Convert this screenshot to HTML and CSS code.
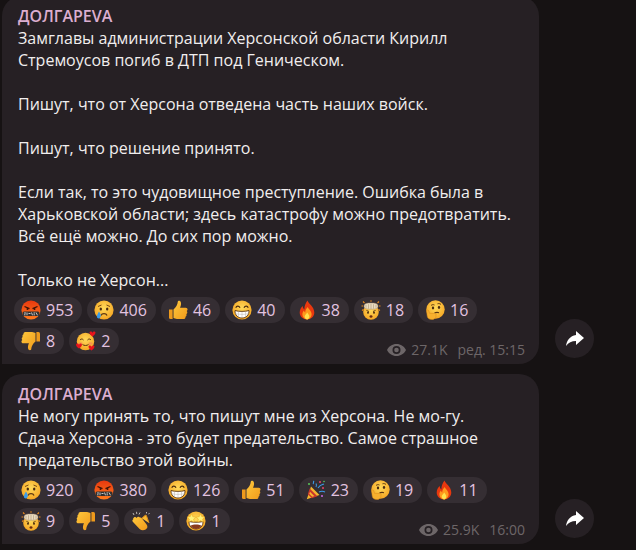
FILE: index.html
```html
<!DOCTYPE html>
<html lang="en">
<head>
    <meta charset="UTF-8">
    <meta name="viewport" content="width=device-width, initial-scale=1.0">
    <title>ДОЛГАРЕVА</title>
    <link rel="stylesheet" href="styles.css">
</head>
<body>
    <svg class="sprites" width="0" height="0">
        <defs>
            <radialGradient id="yel" cx="50%" cy="40%" r="60%"><stop offset="0" stop-color="#ffd95a"/><stop offset="1" stop-color="#f5a623"/></radialGradient>
            <linearGradient id="red" x1="0" y1="0" x2="0" y2="1"><stop offset="0" stop-color="#e8380f"/><stop offset="1" stop-color="#ff7a1c"/></linearGradient>
            <linearGradient id="thumb" x1="0" y1="0" x2="1" y2="1"><stop offset="0" stop-color="#ffc83d"/><stop offset="1" stop-color="#f09a1a"/></linearGradient>
            <symbol id="e-rage" viewBox="0 0 20 20">
                <circle cx="10" cy="10" r="9.6" fill="url(#red)"/>
                <path d="M3.5 6.5 8.5 8.6M16.500 6.500 11.500 8.600" stroke="#3a1208" stroke-width="1.300" fill="none"/>
                <circle cx="6.500" cy="9" r="1" fill="#3a1208"/><circle cx="13.500" cy="9" r="1" fill="#3a1208"/>
                <rect x="1.500" y="11.500" width="17" height="4.500" rx="1.500" fill="#33302f"/>
                <path d="M3 13h2M3 14.800h1.500M6 12.500v2.800M7.500 13.500h2M10.500 12.500l1 2.800M12.500 13h1.500M12.500 14.800h1.500M15 12.500l1.500 2.800" stroke="#eee" stroke-width=".8"/>
            </symbol>
            <symbol id="e-cry" viewBox="0 0 20 20">
                <circle cx="10" cy="10" r="9.600" fill="url(#yel)"/>
                <path d="M4 6.500 7.500 5M16 6.500 12.500 5" stroke="#7a4a12" stroke-width="1" fill="none"/>
                <ellipse cx="6.800" cy="9" rx="1.200" ry="1.500" fill="#4a2c10"/><ellipse cx="13.200" cy="9" rx="1.200" ry="1.500" fill="#4a2c10"/>
                <path d="M7 15.500C8 13 12 13 13 15.500" stroke="#5a3410" stroke-width="1.300" fill="none"/>
                <path d="M5 11.500C6.800 14.500 7.500 16 6 17.800 4.600 19.300 2.400 18 3 15.800 3.300 14.500 4.300 13 5 11.500Z" fill="#3a9be8"/>
            </symbol>
            <symbol id="e-up" viewBox="0 0 20 20">
                <path d="M1 9.500h3.600v9.500H2.500A1.500 1.500 0 0 1 1 17.500Z" fill="#ee9a1c"/>
                <path d="M5.500 9.500C8 7.500 9.500 5 9.800 1.800 10 .4 12.800.4 13 3c.2 1.800-.5 3.500-1 4.700h5.700c2 0 2.500 2.500 1 3.300 1 1 .7 2.500-.4 3 .6 1.100.1 2.300-.9 2.700.3 1.300-.5 2.300-1.800 2.300H9c-1.500 0-2.500-.8-3.500-1Z" fill="url(#thumb)"/>
            </symbol>
            <symbol id="e-down" viewBox="0 0 20 20">
                <path d="M19 10.500h-3.600V1h2.100A1.500 1.500 0 0 1 19 2.500Z" fill="#ee9a1c"/>
                <path d="M14.500 10.500C12 12.500 10.500 15 10.200 18.200 10 19.600 7.200 19.600 7 17c-.2-1.800.5-3.500 1-4.700H2.300c-2 0-2.500-2.500-1-3.300-1-1-.7-2.500.4-3-.6-1.100-.1-2.300.9-2.700C2.300 2 3.100 1 4.400 1H11c1.500 0 2.500.8 3.500 1Z" fill="url(#thumb)"/>
            </symbol>
            <symbol id="e-grin" viewBox="0 0 20 20">
                <circle cx="10" cy="10" r="9.600" fill="url(#yel)"/>
                <path d="M3.800 7.800C4.500 5.600 7 5.600 8 7.800M12 7.800c1-2.200 3.500-2.200 4.200 0" stroke="#4a2c10" stroke-width="1.200" fill="none"/>
                <path d="M3 10.500c3 1.200 11 1.200 14 0 .3 4.500-3 7.500-7 7.500s-7.300-3-7-7.500Z" fill="#fff" stroke="#5a3410" stroke-width=".9"/>
                <path d="M3.500 13.500c4 1.200 9 1.200 13 0M6.500 11.500v5.500M10 11.700v6M13.500 11.500v5.500" stroke="#b9b2a8" stroke-width=".5" fill="none"/>
            </symbol>
            <symbol id="e-fire" viewBox="0 0 20 20">
                <path d="M10.500.5c1 3.500 6.800 6 6.800 12 0 4-3.300 7-7.300 7s-7.300-3-7.300-7c0-2.700 1.300-4.800 3-6.500.1 1.500.6 2.700 1.700 3.500C7.300 6 8.500 3 10.500.5Z" fill="#e8380f"/>
                <path d="M10.800 7c.5 2 3.800 3.800 3.800 7.300 0 2.800-2 5-4.600 5s-4.600-2.200-4.600-5c0-1.500.7-2.800 1.600-3.700.2.900.6 1.500 1.200 2C8.200 10.500 9.200 8.500 10.800 7Z" fill="#ff9a1c"/>
                <path d="M10.300 12.500c.3 1.200 2 2 2 3.900 0 1.600-1 3-2.300 3s-2.300-1.300-2.300-2.800c0-1.700 1.800-2.500 2.600-4.100Z" fill="#ffe14d"/>
            </symbol>
            <symbol id="e-boom" viewBox="0 0 20 20">
                <circle cx="10" cy="12" r="7.800" fill="url(#yel)"/>
                <path d="M3 6.200C3 3.500 6 3 10 3s7 .5 7 3.200-3 3-7 3-7-.3-7-3Z" fill="#e9dcc0" stroke="#a5886a" stroke-width=".5"/>
                <path d="M5 4.800v3M7.500 4.200v4.500M10 4v5M12.500 4.200v4.500M15 4.800v3" stroke="#b79f80" stroke-width=".7"/>
                <path d="M2 1.500 3.500 3M18 1.500 16.500 3M.5 6h1.500M18 6h1.500M1 10.500l1.500-1M19 10.500l-1.500-1M10 .2v1.600" stroke="#e8891c" stroke-width="1.100"/>
                <path d="M5.500 10.500 8 11.500M14.500 10.500 12 11.500" stroke="#4a2c10" stroke-width=".9"/>
                <circle cx="7" cy="12.800" r="1" fill="#4a2c10"/><circle cx="13" cy="12.800" r="1" fill="#4a2c10"/>
                <ellipse cx="10" cy="16.500" rx="1.500" ry="1.300" fill="#6a2a12"/>
            </symbol>
            <symbol id="e-think" viewBox="0 0 20 20">
                <circle cx="10.500" cy="9.500" r="9.200" fill="url(#yel)"/>
                <path d="M6 5.500C7 4.500 8.500 4.500 9.500 5M12.500 3.800c1.200-.5 2.700-.2 3.500.8" stroke="#5a3410" stroke-width="1" fill="none"/>
                <ellipse cx="8" cy="8" rx="1.200" ry="1.400" fill="#4a2c10"/><ellipse cx="14" cy="7.500" rx="1.200" ry="1.400" fill="#4a2c10"/>
                <path d="M9.500 13c1.500-.8 3-.8 4.500-.3" stroke="#5a3410" stroke-width="1.100" fill="none"/>
                <path d="M1.500 10.500c1-.8 2-.5 2.300.5l.7 2.300 5.500.2c1.500.1 1.500 2 .7 2.300.6 1 .1 2-.7 2.200-.5 1-1.500 1.500-3 1.500-3 0-4.500-1.200-4.800-3.500Z" fill="#f7b02e" stroke="#d98a18" stroke-width=".5"/>
            </symbol>
            <symbol id="e-hearts" viewBox="0 0 20 20">
                <circle cx="9.500" cy="10.500" r="8.700" fill="url(#yel)"/>
                <path d="M4 9c1-1.300 2.500-1.300 3.500 0M11.500 9c1-1.300 2.500-1.300 3.500 0M6.500 13.500c1.500 1.300 4.500 1.300 6 0" stroke="#5a3410" stroke-width="1" fill="none"/>
                <ellipse cx="4.500" cy="12.500" rx="2" ry="1.300" fill="#f2885a" opacity=".7"/><ellipse cx="14.500" cy="12.500" rx="2" ry="1.300" fill="#f2885a" opacity=".7"/>
                <path id="h1" d="M16.500 5.500C13.500 3.500 13 1.500 14 .8c1-.6 2 0 2.500 1 .5-1 1.500-1.600 2.500-1 1 .7.500 2.700-2.500 4.700Z" fill="#e8141c"/>
                <path d="M3 17.500C0 15.500-.5 13.500.5 12.800c1-.6 2 0 2.500 1 .5-1 1.500-1.600 2.500-1 1 .7.500 2.700-2.500 4.700Z" fill="#e8141c"/>
                <path d="M15.500 19.500c-3-2-3.500-4-2.500-4.700 1-.6 2 0 2.500 1 .5-1 1.500-1.600 2.500-1 1 .7.500 2.700-2.500 4.700Z" fill="#e8141c"/>
            </symbol>
            <symbol id="e-party" viewBox="0 0 20 20">
                <path d="M.8 19.200 5 6.500 13.500 15Z" fill="#f5b52e"/>
                <path d="M2.500 14 4 9.800l6.200 6.200-4.200 1.500ZM3.700 10.500l5.800 5.800" stroke="#c8352c" stroke-width="1.300" fill="none"/>
                <path d="M7 4c1-1 0-2 1-3M12 8c2-3 3-3 6-4M13 12c2-1 4-1 6 0M10 3.500c.5 1 1 2 0 3.500" stroke="#3a9be8" stroke-width="1.100" fill="none"/>
                <circle cx="14" cy="2" r="1" fill="#e8456a"/><circle cx="17" cy="8" r="1" fill="#e8456a"/><circle cx="3" cy="4" r="1" fill="#5ac85a"/><circle cx="16" cy="16" r="1" fill="#c86ae8"/><circle cx="18" cy="1.500" r=".8" fill="#5ac85a"/>
            </symbol>
            <symbol id="e-clap" viewBox="0 0 20 20">
                <path d="M3 6.500c.8-.8 2-.5 2.500.4l1-.9c.8-.7 2-.3 2.300.6.800-.4 1.700 0 2 .7l4.800 6.200c1.500 2.200.8 4-1 5-2 1.200-4.300 1-6-.5L1.800 10.800C1 10 1.300 8.800 2.300 8.600 1.900 7.800 2.200 7 3 6.500Z" fill="url(#thumb)"/>
                <path d="M10.800 7.300 14 4.500c.8-.6 1.800 0 1.700.9l2.300 6.500" stroke="#e08e18" stroke-width="1" fill="#f9ba33"/>
                <path d="M2 2 3 4M5.500.8 5.800 3M9 1.500 8 3.500M15.500 1v1.500M18.500 2l-1 1.300" stroke="#c9c5c0" stroke-width=".9"/>
            </symbol>
            <symbol id="e-star" viewBox="0 0 20 20">
                <circle cx="10" cy="10" r="9.600" fill="url(#yel)"/>
                <path d="M3 10.500c3 1 11 1 14 0 .3 4.500-3 7.500-7 7.500s-7.300-3-7-7.500Z" fill="#fff" stroke="#5a3410" stroke-width=".9"/>
                <path d="M4.500 14.500c3-1.500 8-1.500 11 0-1 2.300-3 3.500-5.500 3.500s-4.500-1.200-5.500-3.500Z" fill="#8a3a1c"/>
                <path id="s1" d="m5.500 2.800 1.300 2.900 3 .4-2.200 2 .6 3-2.700-1.500-2.700 1.500.6-3-2.200-2 3-.4Z" fill="#fff27a" stroke="#e8a81c" stroke-width=".5"/>
                <path d="m14.500 2.800 1.300 2.900 3 .4-2.200 2 .6 3-2.700-1.500-2.700 1.500.6-3-2.200-2 3-.4Z" fill="#fff27a" stroke="#e8a81c" stroke-width=".5"/>
            </symbol>
            <symbol id="i-eye" viewBox="0 0 19 12">
                <path fill-rule="evenodd" d="M9.500 0C5.200 0 1.700 2.500 0 6c1.700 3.500 5.200 6 9.500 6s7.800-2.500 9.500-6c-1.700-3.500-5.200-6-9.500-6Zm0 10a4 4 0 1 1 0-8 4 4 0 0 1 0 8Zm0-6.300a2.300 2.300 0 1 0 0 4.600 2.300 2.300 0 0 0 0-4.600Z"/>
            </symbol>
        </defs>
    </svg>

    <div class="feed">
        <div class="row">
            <div class="bubble">
                <div class="name">ДОЛГАРЕVА</div>
                <div class="text">
                    <p>Замглавы администрации Херсонской области Кирилл<br>Стремоусов погиб в ДТП под Геническом.</p>
                    <p>Пишут, что от Херсона отведена часть наших войск.</p>
                    <p>Пишут, что решение принято.</p>
                    <p>Если так, то это чудовищное преступление. Ошибка была в<br>Харьковской области; здесь катастрофу можно предотвратить.<br>Всё ещё можно. До сих пор можно.</p>
                    <p>Только не Херсон...</p>
                </div>
                <div class="reactions">
                    <span class="chip"><svg class="emoji"><use href="#e-rage"/></svg>953</span>
                    <span class="chip"><svg class="emoji"><use href="#e-cry"/></svg>406</span>
                    <span class="chip"><svg class="emoji"><use href="#e-up"/></svg>46</span>
                    <span class="chip"><svg class="emoji"><use href="#e-grin"/></svg>40</span>
                    <span class="chip"><svg class="emoji"><use href="#e-fire"/></svg>38</span>
                    <span class="chip"><svg class="emoji"><use href="#e-boom"/></svg>18</span>
                    <span class="chip"><svg class="emoji"><use href="#e-think"/></svg>16</span>
                    <span class="chip"><svg class="emoji"><use href="#e-down"/></svg>8</span>
                    <span class="chip"><svg class="emoji"><use href="#e-hearts"/></svg>2</span>
                </div>
                <div class="meta"><svg class="eye"><use href="#i-eye"/></svg><span>27.1K</span><span class="time">ред. 15:15</span></div>
            </div>
            <button class="share"><svg width="18" height="15" viewBox="0 0 18 15"><path d="M10 0 18 7 10 14V10C5.500 10 2.500 11.500 0 15 .8 9.500 4 5 10 4Z"/></svg></button>
        </div>

        <div class="row">
            <div class="bubble">
                <div class="name">ДОЛГАРЕVА</div>
                <div class="text">
                    <p>Не могу принять то, что пишут мне из Херсона. Не мо-гу.<br>Сдача Херсона - это будет предательство. Самое страшное<br>предательство этой войны.</p>
                </div>
                <div class="reactions">
                    <span class="chip"><svg class="emoji"><use href="#e-cry"/></svg>920</span>
                    <span class="chip"><svg class="emoji"><use href="#e-rage"/></svg>380</span>
                    <span class="chip"><svg class="emoji"><use href="#e-grin"/></svg>126</span>
                    <span class="chip"><svg class="emoji"><use href="#e-up"/></svg>51</span>
                    <span class="chip"><svg class="emoji"><use href="#e-party"/></svg>23</span>
                    <span class="chip"><svg class="emoji"><use href="#e-think"/></svg>19</span>
                    <span class="chip"><svg class="emoji"><use href="#e-fire"/></svg>11</span>
                    <span class="chip"><svg class="emoji"><use href="#e-boom"/></svg>9</span>
                    <span class="chip"><svg class="emoji"><use href="#e-down"/></svg>5</span>
                    <span class="chip"><svg class="emoji"><use href="#e-clap"/></svg>1</span>
                    <span class="chip"><svg class="emoji"><use href="#e-star"/></svg>1</span>
                </div>
                <div class="meta"><svg class="eye"><use href="#i-eye"/></svg><span>25.9K</span><span class="time">16:00</span></div>
            </div>
            <button class="share"><svg width="18" height="15" viewBox="0 0 18 15"><path d="M10 0 18 7 10 14V10C5.500 10 2.500 11.500 0 15 .8 9.500 4 5 10 4Z"/></svg></button>
        </div>
    </div>
</body>
</html>
```

FILE: styles.css
```css
html, body {
    height: 100%;
}
body {
    margin: 0;
    background: #161213;
    color: #f1eeee;
    font-family: "Open Sans", sans-serif;
    font-size: 16px;
    line-height: 22px;
    overflow: hidden;
}
.sprites {
    display: block;
}
.feed {
    display: flex;
    flex-direction: column;
    gap: 10px;
    margin-top: -4px;
    padding-left: 2px;
}
.row {
    display: flex;
    align-items: flex-end;
}
.bubble {
    position: relative;
    width: 537px;
    padding: 9px 0 10px;
    background: #262024;
    border-radius: 20px 20px 20px 0;
}
.name {
    margin-left: 16px;
    color: #dcaed0;
    font-weight: 600;
}
.text {
    margin: 0 16px 6px;
}
.text p {
    margin: 0 0 22px;
}
.text p:last-child {
    margin-bottom: 0;
}
.reactions {
    display: flex;
    flex-wrap: wrap;
    gap: 5px;
    margin: 0 12px;
}
.chip {
    display: flex;
    align-items: center;
    gap: 5px;
    height: 26px;
    padding: 0 9px 0 7px;
    background: #352e33;
    border-radius: 13px;
    color: #e3c3e0;
}
.emoji {
    width: 20px;
    height: 20px;
}
.meta {
    position: absolute;
    right: 14px;
    bottom: 5px;
    display: flex;
    align-items: center;
    color: #6d6668;
    font-size: 14px;
    line-height: 18px;
}
.eye {
    width: 19px;
    height: 12px;
    margin-right: 5px;
    fill: #6d6668;
}
.time {
    margin-left: 10px;
}
.share {
    display: flex;
    align-items: center;
    justify-content: center;
    width: 39px;
    height: 39px;
    margin: 0 0 6px 16px;
    padding: 0;
    border: none;
    border-radius: 50%;
    background: #262024;
}
.share svg {
    fill: #fff;
}
```
